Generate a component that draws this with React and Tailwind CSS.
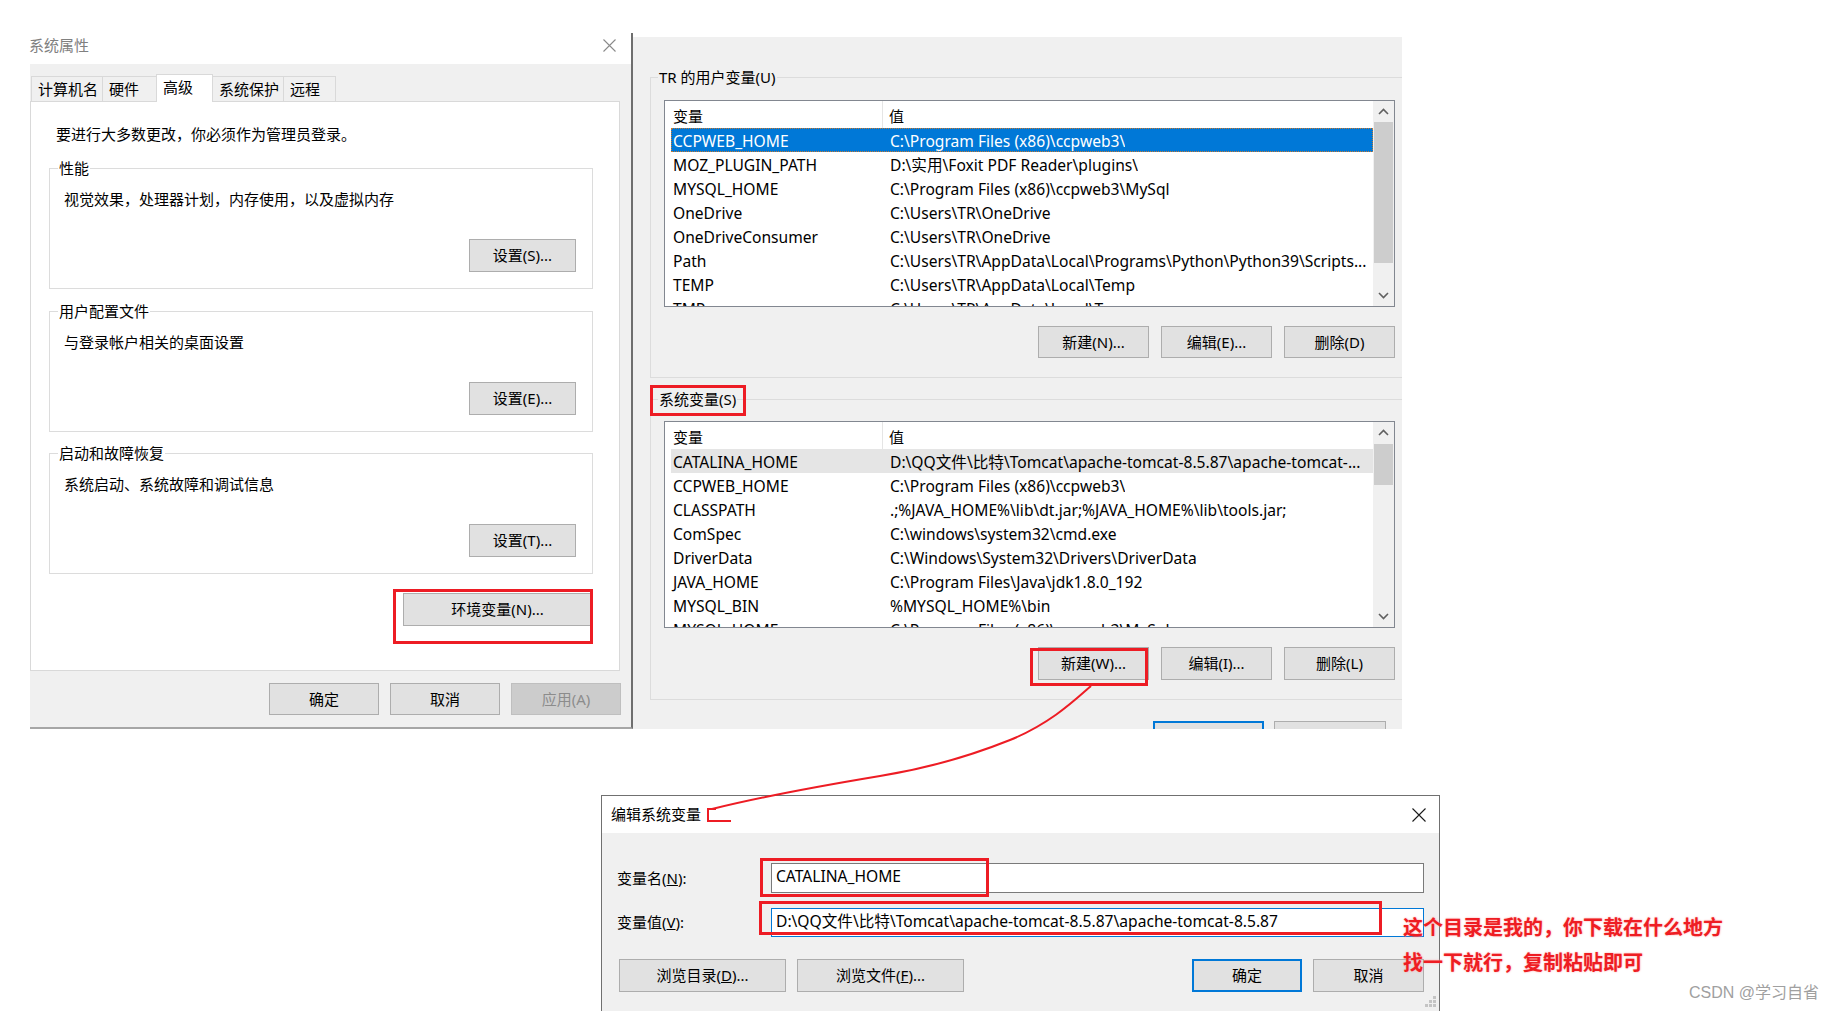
import React from 'react';

function Btn({ children, className = '' }) {
  return (
    <div className={`flex items-center justify-center bg-[#e1e1e1] border border-[#adadad] text-[15px] text-black whitespace-nowrap ${className}`}>
      {children}
    </div>
  );
}

function Chevron({ up }) {
  return (
    <svg width="11" height="7" viewBox="0 0 11 7">
      <polyline
        points={up ? '1,6 5.5,1.5 10,6' : '1,1 5.5,5.5 10,1'}
        fill="none"
        stroke="#606060"
        strokeWidth="1.6"
      />
    </svg>
  );
}

function Scrollbar({ thumbClass }) {
  return (
    <div className="w-[21px] h-full bg-[#f0f0f0] flex flex-col shrink-0">
      <div className="h-[21px] flex items-center justify-center shrink-0">
        <Chevron up />
      </div>
      <div className="flex-1 flex flex-col px-[1px]">
        <div className={`bg-[#cdcdcd] ${thumbClass}`} />
      </div>
      <div className="h-[21px] flex items-center justify-center shrink-0">
        <Chevron />
      </div>
    </div>
  );
}

function VarList({ rows, selectedClass, thumbClass }) {
  return (
    <div className="w-[731px] h-[207px] border border-[#828790] bg-white flex overflow-hidden">
      <div className="flex-1 pl-[6px] overflow-hidden">
        <div className="flex h-[27px] items-center text-[15px] text-black">
          <div className="w-[212px] h-full flex items-center pl-[2px] pt-[3px] border-r border-[#e5e5e5] shrink-0">变量</div>
          <div className="pl-[6px] pt-[3px]">值</div>
        </div>
        {rows.map(([k, v], i) => (
          <div
            key={i}
            className={`flex h-[24px] items-center pt-[3px] text-[15.6px] whitespace-nowrap ${i === 0 ? selectedClass : 'text-black'}`}
          >
            <div className="w-[212px] pl-[2px] overflow-hidden shrink-0">{k}</div>
            <div className="pl-[7px] overflow-hidden">{v}</div>
          </div>
        ))}
      </div>
      <Scrollbar thumbClass={thumbClass} />
    </div>
  );
}

const userRows = [
  ['CCPWEB_HOME', 'C:\\Program Files (x86)\\ccpweb3\\'],
  ['MOZ_PLUGIN_PATH', 'D:\\实用\\Foxit PDF Reader\\plugins\\'],
  ['MYSQL_HOME', 'C:\\Program Files (x86)\\ccpweb3\\MySql'],
  ['OneDrive', 'C:\\Users\\TR\\OneDrive'],
  ['OneDriveConsumer', 'C:\\Users\\TR\\OneDrive'],
  ['Path', 'C:\\Users\\TR\\AppData\\Local\\Programs\\Python\\Python39\\Scripts...'],
  ['TEMP', 'C:\\Users\\TR\\AppData\\Local\\Temp'],
  ['TMP', 'C:\\Users\\TR\\AppData\\Local\\Temp'],
];

const sysRows = [
  ['CATALINA_HOME', 'D:\\QQ文件\\比特\\Tomcat\\apache-tomcat-8.5.87\\apache-tomcat-...'],
  ['CCPWEB_HOME', 'C:\\Program Files (x86)\\ccpweb3\\'],
  ['CLASSPATH', '.;%JAVA_HOME%\\lib\\dt.jar;%JAVA_HOME%\\lib\\tools.jar;'],
  ['ComSpec', 'C:\\windows\\system32\\cmd.exe'],
  ['DriverData', 'C:\\Windows\\System32\\Drivers\\DriverData'],
  ['JAVA_HOME', 'C:\\Program Files\\Java\\jdk1.8.0_192'],
  ['MYSQL_BIN', '%MYSQL_HOME%\\bin'],
  ['MYSQL_HOME', 'C:\\Program Files (x86)\\ccpweb3\\MySql'],
];

function Group({ title, text, btn, className = '' }) {
  return (
    <fieldset className={`border border-[#dcdcdc] ml-[18px] w-[544px] ${className}`}>
      <legend className="ml-[8px] px-[1px] text-[15px] leading-[20px] text-black">{title}</legend>
      <div className="pt-[11px] pl-[14px] pr-[16px] pb-[16px]">
        <div className="text-[15px] leading-[20px] h-[20px] text-black">{text}</div>
        <div className="mt-[30px] flex justify-end">
          <Btn className="w-[107px] h-[33px]">{btn}</Btn>
        </div>
      </div>
    </fieldset>
  );
}

function SysProps() {
  const tabs = [
    ['计算机名', 'w-[72px]'],
    ['硬件', 'w-[55px] -ml-px'],
    ['高级', 'w-[57px] -ml-px', true],
    ['系统保护', 'w-[72px] -ml-px'],
    ['远程', 'w-[53px] -ml-px'],
  ];
  return (
    <div className="absolute left-[30px] top-[33px] w-[603px] h-[696px] flex flex-col border-r-2 border-r-[#6e6e6e] border-b-2 border-b-[#a6a6a6]">
      <div className="h-[31px] bg-white flex items-center justify-between pb-[6px] pr-[15px] shrink-0">
        <span className="text-[15px] text-[#808080] -ml-px">系统属性</span>
        <svg width="13" height="13" viewBox="0 0 13 13">
          <path d="M0.5 0.5 L12.5 12.5 M12.5 0.5 L0.5 12.5" stroke="#8a8a8a" strokeWidth="1.1" />
        </svg>
      </div>
      <div className="flex-1 bg-[#f0f0f0] flex flex-col">
        <div className="pt-[10px] pl-[1px] h-[37px] flex items-end shrink-0">
          {tabs.map(([t, w, sel], i) =>
            sel ? (
              <div
                key={i}
                className={`${w} h-[28px] -mb-px relative z-10 bg-white border border-b-0 border-[#d9d9d9] pl-[6px] pt-[2px] text-[15px] leading-[20px] text-black`}
              >
                {t}
              </div>
            ) : (
              <div
                key={i}
                className={`${w} h-[25px] border border-b-0 border-[#d9d9d9] pl-[6px] pt-[2px] text-[15px] leading-[20px] text-black`}
              >
                {t}
              </div>
            )
          )}
        </div>
        <div className="relative w-[590px] h-[570px] bg-white border border-[#d9d9d9] shrink-0">
          <div className="pt-[22px] pl-[25px] text-[15px] leading-[20px] h-[43px] text-black">
            要进行大多数更改，你必须作为管理员登录。
          </div>
          <Group className="mt-[13px]" title="性能" text="视觉效果，处理器计划，内存使用，以及虚拟内存" btn="设置(S)..." />
          <Group className="mt-[12px]" title="用户配置文件" text="与登录帐户相关的桌面设置" btn="设置(E)..." />
          <Group className="mt-[11px]" title="启动和故障恢复" text="系统启动、系统故障和调试信息" btn="设置(T)..." />
          <div className="mt-[19px] ml-[372px]">
            <Btn className="w-[189px] h-[33px]">环境变量(N)...</Btn>
          </div>
          <div className="absolute left-[362px] top-[487px] w-[200px] h-[55px] border-[3px] border-[#ed1c24]" />
        </div>
        <div className="flex-1 flex justify-end items-start pt-[12px] pr-[10px] gap-[11px]">
          <Btn className="w-[110px] h-[32px]">确定</Btn>
          <Btn className="w-[110px] h-[32px]">取消</Btn>
          <div className="w-[110px] h-[32px] flex items-center justify-center bg-[#cccccc] border border-[#bfbfbf] text-[15px] text-[#8c8c8c]">
            应用(A)
          </div>
        </div>
      </div>
    </div>
  );
}

function EnvVars() {
  return (
    <div className="absolute left-[633px] top-[37px] w-[769px] h-[692px] bg-[#f0f0f0] overflow-hidden pl-[17px] pt-[30px]">
      <fieldset className="w-[800px] border border-[#dcdcdc]">
        <legend className="ml-[7px] px-[1px] text-[15px] leading-[20px] text-black">TR 的用户变量(U)</legend>
        <div className="pl-[13px] pt-[13px] pb-[19px]">
          <VarList
            rows={userRows}
            selectedClass="bg-[#0078d7] text-white outline outline-1 outline-dotted outline-[#c87a30] -outline-offset-1"
            thumbClass="h-[141px]"
          />
          <div className="w-[731px] flex justify-end gap-[12px] mt-[19px]">
            <Btn className="w-[111px] h-[32px]">新建(N)...</Btn>
            <Btn className="w-[111px] h-[32px]">编辑(E)...</Btn>
            <Btn className="w-[111px] h-[32px]">删除(D)</Btn>
          </div>
        </div>
      </fieldset>
      <fieldset className="w-[800px] border border-[#dcdcdc] mt-[11px]">
        <legend className="ml-[7px] px-[1px] text-[15px] leading-[20px] text-black relative">
          系统变量(S)
          <span className="absolute left-[-8px] top-[-4px] w-[96px] h-[31px] border-[3px] border-[#ed1c24]" />
        </legend>
        <div className="pl-[13px] pt-[12px] pb-[19px]">
          <VarList rows={sysRows} selectedClass="bg-[#e5e5e5] text-black" thumbClass="mt-[1px] h-[41px]" />
          <div className="w-[731px] flex justify-end gap-[12px] mt-[19px] relative">
            <Btn className="w-[111px] h-[33px]">新建(W)...</Btn>
            <Btn className="w-[111px] h-[33px]">编辑(I)...</Btn>
            <Btn className="w-[111px] h-[33px]">删除(L)</Btn>
            <div className="absolute left-[366px] top-[1px] w-[118px] h-[38px] border-[3px] border-[#ed1c24]" />
          </div>
        </div>
      </fieldset>
      <div className="mt-[21px] flex justify-end gap-[10px] pr-[16px]">
        <div className="w-[111px] h-[32px] bg-[#e1e1e1] border-2 border-[#0078d7]" />
        <div className="w-[112px] h-[32px] bg-[#e1e1e1] border border-[#adadad]" />
      </div>
    </div>
  );
}

function EditDialog() {
  return (
    <div className="absolute left-[601px] top-[795px] w-[839px] h-[216px] border border-b-0 border-[#707070] bg-[#f0f0f0] flex flex-col">
      <div className="h-[37px] bg-white flex items-center justify-between pl-[9px] pr-[13px] shrink-0">
        <span className="text-[15px] text-black">编辑系统变量</span>
        <svg width="14" height="14" viewBox="0 0 14 14">
          <path d="M0.5 0.5 L13.5 13.5 M13.5 0.5 L0.5 13.5" stroke="#1a1a1a" strokeWidth="1.1" />
        </svg>
      </div>
      <div className="flex-1 relative pl-[15px] pr-[14px] pt-[30px]">
        <div className="flex items-center h-[30px]">
          <div className="w-[154px] text-[15px] text-black">
            变量名(<span className="underline">N</span>):
          </div>
          <div className="w-[653px] h-[30px] border border-[#7a7a7a] bg-white pl-[4px] pb-[3px] flex items-center text-[15.6px] text-black">
            CATALINA_HOME
          </div>
        </div>
        <div className="flex items-center h-[29px] mt-[15px]">
          <div className="w-[154px] text-[15px] text-black">
            变量值(<span className="underline">V</span>):
          </div>
          <div className="w-[653px] h-[29px] border border-[#0078d7] bg-white pl-[4px] pb-[2px] flex items-center text-[15.6px] text-black whitespace-nowrap">
            D:\QQ文件\比特\Tomcat\apache-tomcat-8.5.87\apache-tomcat-8.5.87
          </div>
        </div>
        <div className="flex mt-[22px] ml-[2px]">
          <div className="flex gap-[11px]">
            <Btn className="w-[167px] h-[33px]">
              浏览目录(<span className="underline">D</span>)...
            </Btn>
            <Btn className="w-[167px] h-[33px]">
              浏览文件(<span className="underline">F</span>)...
            </Btn>
          </div>
          <div className="flex-1" />
          <div className="flex gap-[11px] mr-[1px]">
            <div className="w-[110px] h-[33px] flex items-center justify-center bg-[#e1e1e1] border-2 border-[#0078d7] text-[15px] text-black">
              确定
            </div>
            <Btn className="w-[111px] h-[33px]">取消</Btn>
          </div>
        </div>
        <div className="absolute left-[158px] top-[25px] w-[229px] h-[39px] border-[3px] border-[#ed1c24]" />
        <div className="absolute left-[157px] top-[68px] w-[623px] h-[34px] border-[3px] border-[#ed1c24]" />
        <svg className="absolute right-[2px] bottom-[3px]" width="12" height="12" viewBox="0 0 12 12">
          <rect x="8" y="0" width="3" height="3" fill="#c4c4c4" />
          <rect x="4" y="4" width="3" height="3" fill="#c4c4c4" />
          <rect x="8" y="4" width="3" height="3" fill="#c4c4c4" />
          <rect x="0" y="8" width="3" height="3" fill="#c4c4c4" />
          <rect x="4" y="8" width="3" height="3" fill="#c4c4c4" />
          <rect x="8" y="8" width="3" height="3" fill="#c4c4c4" />
        </svg>
      </div>
    </div>
  );
}

export default function App() {
  return (
    <div className="relative w-[1841px] h-[1011px] bg-white overflow-hidden font-['Noto_Sans','Noto_Sans_CJK_SC',sans-serif]">
      <SysProps />
      <EnvVars />
      <EditDialog />
      <svg className="absolute left-0 top-0 pointer-events-none" width="1841" height="1011" viewBox="0 0 1841 1011">
        <path
          d="M1091 686 C1075 700 1050 724 1010 740 C970 756 930 768 880 776 C820 786 760 797 712 809"
          fill="none"
          stroke="#ed1c24"
          strokeWidth="2"
        />
        <path d="M716 809 L708 809 L708 821 L731 821" fill="none" stroke="#ed1c24" strokeWidth="2" />
      </svg>
      <div className="absolute left-[1403px] top-[909px] text-[20px] leading-[35px] font-bold text-[#ee1d23] font-['Noto_Sans_CJK_SC',sans-serif] [text-shadow:0_0_2px_#ff9aa0]">
        <div>这个目录是我的，你下载在什么地方</div>
        <div>找一下就行，复制粘贴即可</div>
      </div>
      <div className="absolute left-[1689px] top-[982px] text-[16px] leading-[22px] text-[#a0a0a0] font-['Liberation_Sans','Noto_Sans_CJK_SC',sans-serif]">
        CSDN @学习自省
      </div>
    </div>
  );
}
